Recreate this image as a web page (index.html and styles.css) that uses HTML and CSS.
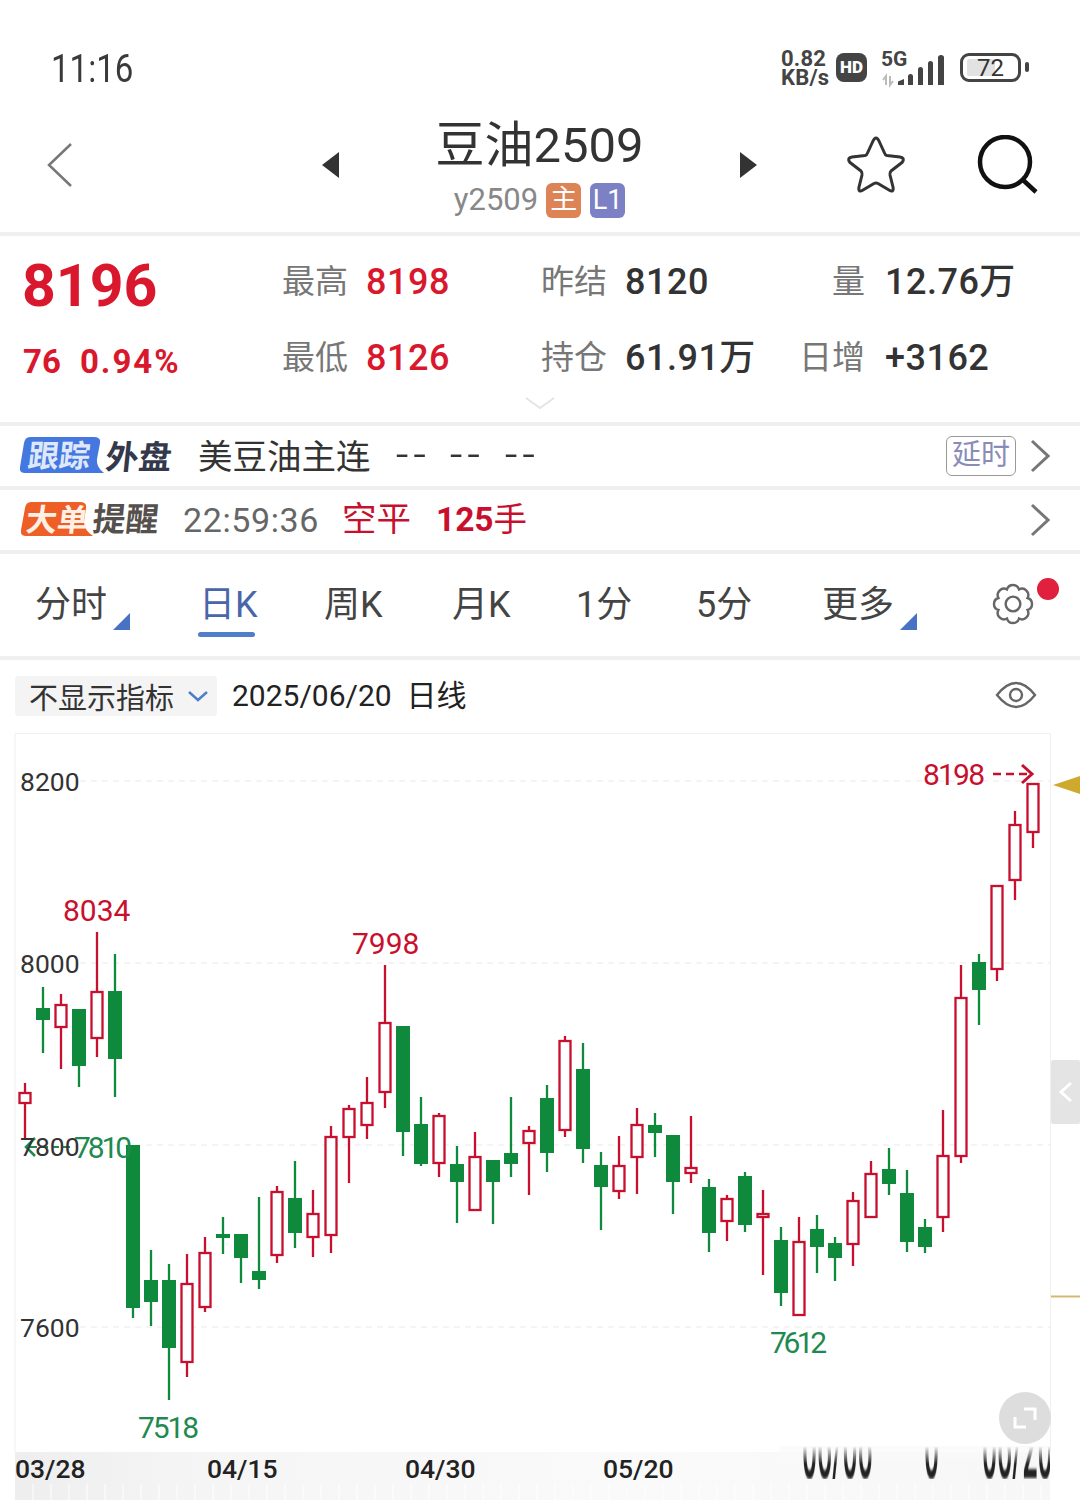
FILE: index.html
```html
<!DOCTYPE html>
<html lang="zh">
<head>
<meta charset="utf-8">
<title>豆油2509</title>
<link rel="stylesheet" href="styles.css">
</head>
<body>
<div class="page">
  <div class="status">
    <span class="clock">11:16</span>
    <div class="status-right">
      <span class="speed">0.82<br>KB/s</span>
      <span class="hd">HD</span>
      <svg class="signal" width="68" height="36" viewBox="0 0 68 36">
        <text class="five-g" x="0" y="17">5G</text>
        <path class="arrows" d="M5 36V27L2 31M9 27V36L12 32"/>
        <path class="bars" d="M17 36V32.5L23 30V36ZM27 36V27.5Q27 25 29.5 25T32 27.5V36ZM37 36V20.5Q37 18 39.5 18T42 20.5V36ZM47 36V14.5Q47 12 49.5 12T52 14.5V36ZM57 36V8.5Q57 6 60 6T63 8.5V36Z"/>
      </svg>
      <div class="battery"><span class="battery-fill"></span><span class="battery-num">72</span></div>
      <span class="nub"></span>
    </div>
  </div>

  <header class="head sep">
    <div class="back-cell">
      <svg width="28" height="46" viewBox="0 0 28 46"><path class="back" d="M25 2L3 23L25 44"/></svg>
    </div>
    <div class="title-cell">
      <span class="tri-l"></span>
      <div class="title-block">
        <div class="title">豆油2509</div>
        <div class="sub">y2509<span class="tag tag-main">主</span><span class="tag tag-l1">L1</span></div>
      </div>
      <span class="tri-r"></span>
    </div>
    <div class="head-icons">
      <svg width="62" height="60" viewBox="0 0 62 60"><path class="star" d="M28 6Q31 0 34 6L39.5 18Q40 20 42 20.5L55 22Q60.5 23 57 27.5L46 36Q44.5 37.5 45 40L48 52Q49 58 44 55L33 48.5Q31 47.5 29 48.5L18 55Q13 58 14 52L17 40Q17.5 37.5 16 36L5 27.5Q1.5 23 7 22L20 20.5Q22 20 22.5 18Z"/></svg>
      <svg width="62" height="60" viewBox="0 0 62 60"><circle class="lens" cx="29" cy="27" r="25"/><path class="lens" d="M47 45L60 57"/></svg>
    </div>
  </header>

  <section class="quote sep">
    <div class="last">8196</div>
    <div class="stat"><span class="lab">最高</span><span class="val up">8198</span></div>
    <div class="stat"><span class="lab">昨结</span><span class="val">8120</span></div>
    <div class="stat stat-r"><span class="lab">量</span><span class="val">12.76万</span></div>
    <div class="change"><span>76</span><span class="pct">0.94%</span></div>
    <div class="stat"><span class="lab">最低</span><span class="val up">8126</span></div>
    <div class="stat"><span class="lab">持仓</span><span class="val">61.91万</span></div>
    <div class="stat stat-r"><span class="lab">日增</span><span class="val">+3162</span></div>
    <div class="more"><svg width="30" height="14" viewBox="0 0 30 14"><path class="more-ic" d="M1 2L15 12L29 2"/></svg></div>
  </section>

  <div class="row row-a sep">
    <div class="logo">
      <span class="pill pill-w83">
        <svg class="pill-bg" width="84" height="36" viewBox="0 0 84 36"><path class="pill-blue" d="M10 0H74Q81 0 80 6L77 22Q76 30 84 36H5Q-1 36 0 30L4 6Q5 0 10 0Z"/></svg>
        <span class="pill-text pill-text-b">跟踪</span>
      </span>
      <span class="logo-txt logo-b">外盘</span>
    </div>
    <span class="name">美豆油主连</span>
    <span class="dash"><span>--</span><span>--</span><span>--</span></span>
    <span class="delay">延时</span>
    <svg class="chev" width="20" height="34" viewBox="0 0 20 34"><path d="M2 2L18 17L2 32"/></svg>
  </div>

  <div class="row row-b sep">
    <div class="logo">
      <span class="pill pill-w72">
        <svg class="pill-bg" width="72" height="34" viewBox="0 0 72 34"><path class="pill-orange" d="M10 0H59Q66 0 65 6L63 20Q63 28 72 34H5Q-1 34 0 28L4 6Q5 0 10 0Z"/></svg>
        <span class="pill-text pill-text-o">大单</span>
      </span>
      <span class="logo-txt logo-g">提醒</span>
    </div>
    <span class="time">22:59:36</span>
    <span class="kp">空平</span>
    <span class="hands"><b>125</b>手</span>
    <svg class="chev" width="20" height="34" viewBox="0 0 20 34"><path d="M2 2L18 17L2 32"/></svg>
  </div>

  <nav class="tabs sep">
    <span class="tab">分时<i class="corner"></i></span>
    <span class="tab tab-on">日K</span>
    <span class="tab">周K</span>
    <span class="tab">月K</span>
    <span class="tab">1分</span>
    <span class="tab">5分</span>
    <span class="tab">更多<i class="corner"></i></span>
    <span class="gear-wrap">
      <svg width="42" height="42" viewBox="0 0 40 40"><path class="gear" d="M33.86 14.26A6 6 0 0 1 33.86 25.74A6 6 0 0 1 25.74 33.86A6 6 0 0 1 14.26 33.86A6 6 0 0 1 6.14 25.74A6 6 0 0 1 6.14 14.26A6 6 0 0 1 14.26 6.14A6 6 0 0 1 25.74 6.14A6 6 0 0 1 33.86 14.26Z"/><circle class="gear" cx="20" cy="20" r="7"/></svg>
      <i class="dot"></i>
    </span>
  </nav>

  <div class="tools">
    <span class="picker">不显示指标<svg width="22" height="12" viewBox="0 0 22 12"><path class="picker-ic" d="M2 2L11 10L20 2"/></svg></span>
    <span class="date">2025/06/20&nbsp; 日线</span>
    <svg class="eye" width="42" height="30" viewBox="0 0 42 30"><path class="eye-ic" d="M2 15Q21 -9 40 15Q21 39 2 15Z"/><circle class="eye-ic" cx="21" cy="15" r="6"/></svg>
  </div>

  <svg class="chart" width="1080" height="767" viewBox="0 733 1080 767">
    <defs>
      <linearGradient id="band" x1="0" x2="1" y1="0" y2="0"><stop offset="0" stop-color="#eeeeee"/><stop offset=".18" stop-color="#f5f5f5"/><stop offset=".6" stop-color="#fafafa"/><stop offset="1" stop-color="#f7f7f7"/></linearGradient>
      <linearGradient id="fade" x1="0" x2="0" y1="0" y2="1"><stop offset="0" stop-color="#fafafa"/><stop offset="1" stop-color="#fafafa" stop-opacity="0"/></linearGradient>
      <clipPath id="smear"><rect x="780" y="1447" width="270" height="32"/></clipPath>
      <filter id="soft" x="-5%" y="-50%" width="110%" height="200%"><feGaussianBlur stdDeviation="0.6 1.6"/></filter>
    </defs>
    <path class="frame" d="M15 1452V733.5H1050.5V1452"/>
    <path class="grid" d="M80 781H1050M80 963H1050M80 1145H1050M80 1327H1050"/>
    <rect x="15" y="1452" width="1035" height="48" fill="url(#band)"/>
    <path class="ticks" d="M33 1484V1500M51 1484V1500M69 1484V1500M87 1484V1500M105 1484V1500M123 1484V1500M141 1484V1500M159 1484V1500M177 1484V1500M195 1484V1500M213 1484V1500M231 1484V1500M249 1484V1500M267 1484V1500M285 1484V1500M303 1484V1500M321 1484V1500M339 1484V1500M357 1484V1500M375 1484V1500M393 1484V1500M411 1484V1500M429 1484V1500M447 1484V1500M465 1484V1500M483 1484V1500M501 1484V1500M519 1484V1500M537 1484V1500M555 1484V1500M573 1484V1500M591 1484V1500M609 1484V1500M627 1484V1500M645 1484V1500M663 1484V1500M681 1484V1500M699 1484V1500M717 1484V1500M735 1484V1500M753 1484V1500M771 1484V1500M789 1484V1500M807 1484V1500M825 1484V1500M843 1484V1500M861 1484V1500M879 1484V1500M897 1484V1500M915 1484V1500M933 1484V1500M951 1484V1500M969 1484V1500M987 1484V1500M1005 1484V1500M1023 1484V1500M1041 1484V1500"/>

    <path class="wick-r" d="M25 1083V1140M61 994V1069M97 932V1057M187 1254V1377M205 1237V1312M277 1186V1263M313 1190V1257M331 1126V1253M349 1105V1183M367 1077V1139M385 965V1108M439 1113V1177M475 1132V1210M529 1126V1195M565 1036V1137M619 1136V1199M637 1108V1194M691 1116V1183M727 1195V1241M763 1190V1275M799 1217V1315M853 1192V1266M871 1161V1217M943 1110V1232M961 965V1163M997 885V981M1015 811V900M1033 784V848"/>
    <path class="wick-g" d="M43 987V1053M79 1009V1087M115 954V1097M133 1145V1318M151 1250V1326M169 1264V1400M223 1217V1254M241 1234V1283M259 1197V1289M295 1161V1248M403 1026V1156M421 1097V1166M457 1146V1223M493 1160V1224M511 1097V1177M547 1085V1172M583 1043V1163M601 1152V1230M655 1113V1157M673 1135V1214M709 1179V1252M745 1172V1232M781 1227V1306M817 1215V1273M835 1237V1281M889 1148V1195M907 1170V1252M925 1219V1253M979 954V1025"/>
    <g class="body-r">
      <rect x="19.5" y="1093" width="11" height="10"/><rect x="55.5" y="1005" width="11" height="22"/><rect x="91.5" y="992" width="11" height="46"/><rect x="181.5" y="1284" width="11" height="78"/><rect x="199.5" y="1253" width="11" height="54"/><rect x="271.5" y="1192" width="11" height="63"/><rect x="307.5" y="1214" width="11" height="23"/><rect x="325.5" y="1137" width="11" height="98"/><rect x="343.5" y="1109" width="11" height="28"/><rect x="361.5" y="1103" width="11" height="22"/><rect x="379.5" y="1023" width="11" height="69"/><rect x="433.5" y="1116" width="11" height="47"/><rect x="469.5" y="1157" width="11" height="53"/><rect x="523.5" y="1131" width="11" height="12"/><rect x="559.5" y="1041" width="11" height="89"/><rect x="613.5" y="1166" width="11" height="25"/><rect x="631.5" y="1125" width="11" height="32"/><rect x="685.5" y="1168" width="11" height="5"/><rect x="721.5" y="1199" width="11" height="22"/><rect x="757.5" y="1214" width="11" height="3"/><rect x="793.5" y="1242" width="11" height="73"/><rect x="847.5" y="1201" width="11" height="43"/><rect x="865.5" y="1174" width="11" height="43"/><rect x="937.5" y="1156" width="11" height="61"/><rect x="955.5" y="998" width="11" height="158"/><rect x="991.5" y="886" width="11" height="83"/><rect x="1009.5" y="825" width="11" height="55"/><rect x="1027.5" y="784" width="11" height="48"/>
    </g>
    <g class="body-g">
      <rect x="36" y="1008" width="14" height="12"/><rect x="72" y="1009" width="14" height="57"/><rect x="108" y="991" width="14" height="68"/><rect x="126" y="1145" width="14" height="163"/><rect x="144" y="1280" width="14" height="22"/><rect x="162" y="1280" width="14" height="68"/><rect x="216" y="1234" width="14" height="4"/><rect x="234" y="1234" width="14" height="24"/><rect x="252" y="1271" width="14" height="9"/><rect x="288" y="1198" width="14" height="35"/><rect x="396" y="1026" width="14" height="106"/><rect x="414" y="1124" width="14" height="40"/><rect x="450" y="1164" width="14" height="18"/><rect x="486" y="1160" width="14" height="22"/><rect x="504" y="1153" width="14" height="11"/><rect x="540" y="1098" width="14" height="55"/><rect x="576" y="1069" width="14" height="80"/><rect x="594" y="1165" width="14" height="22"/><rect x="648" y="1125" width="14" height="8"/><rect x="666" y="1135" width="14" height="47"/><rect x="702" y="1187" width="14" height="46"/><rect x="738" y="1176" width="14" height="49"/><rect x="774" y="1240" width="14" height="53"/><rect x="810" y="1229" width="14" height="18"/><rect x="828" y="1243" width="14" height="15"/><rect x="882" y="1169" width="14" height="15"/><rect x="900" y="1193" width="14" height="49"/><rect x="918" y="1227" width="14" height="20"/><rect x="972" y="962" width="14" height="28"/>
    </g>

    <path class="low-dash" d="M30 1147H74"/>
    <path class="low-head" d="M35 1138L26 1147L35 1156"/>
    <text class="low" x="74" y="1158" textLength="58">7810</text>
    <text class="axis" x="20" y="791">8200</text>
    <text class="axis" x="20" y="973">8000</text>
    <text class="axis" x="20" y="1156">7800</text>
    <text class="axis" x="20" y="1337">7600</text>
    <text class="peak" x="63" y="921">8034</text>
    <text class="peak" x="352" y="954">7998</text>
    <text class="peak" x="923" y="785" textLength="62">8198</text>
    <path class="peak-dash" d="M993 774H1031"/>
    <path class="peak-head" d="M1022 765L1032 774L1022 783"/>
    <text class="low" x="138" y="1438" textLength="61">7518</text>
    <text class="low" x="770" y="1353" textLength="57">7612</text>

    <text class="xdate" x="15" y="1478">03/28</text>
    <text class="xdate" x="207" y="1478">04/15</text>
    <text class="xdate" x="405" y="1478">04/30</text>
    <text class="xdate" x="603" y="1478">05/20</text>
    <g clip-path="url(#smear)"><g filter="url(#soft)">
      <text class="xdate" transform="translate(802 1478) scale(1 3.6)">06/06</text>
      <text class="xdate" transform="translate(924 1478) scale(1 3.6)">0</text>
      <text class="xdate" transform="translate(982 1478) scale(1 3.6)">06/20</text>
    </g></g>
    <rect x="780" y="1446" width="270" height="18" fill="url(#fade)"/>

    <path class="gold-tri" d="M1053 785L1080 776V794Z"/>
    <path class="gold-line" d="M1051 1296.5H1080"/>
    <rect class="side" x="1051" y="1060" width="29" height="64" rx="2"/>
    <path class="side-ic" d="M1071 1083L1061 1092L1071 1101"/>
    <circle class="expand" cx="1025" cy="1418" r="26"/>
    <path class="expand-ic" d="M1015 1417V1427H1026M1024 1409H1035V1420"/>
  </svg>
</div>
</body>
</html>
```

FILE: styles.css
```css
* { box-sizing: border-box; }
html, body { margin: 0; padding: 0; background: #fff; }
body { font-family: Roboto, "Noto Sans CJK SC", sans-serif; color: #333; }
i { font-style: normal; }

.page { width: 1080px; height: 1500px; overflow: hidden; display: flex; flex-direction: column; background: #fff; }
.sep { border-bottom: 4px solid #f0f0f0; }

/* status bar */
.status { height: 112px; flex: none; display: flex; justify-content: space-between; padding: 45px 51px 0; }
.clock { display: inline-block; height: 48px; font-size: 38px; line-height: 48px; color: #3a3a3a; transform: scaleX(.87); transform-origin: left center; }
.status-right { position: relative; display: flex; align-items: flex-start; height: 40px; padding-top: 7px; }
.speed { width: 55px; font-size: 22px; line-height: 19px; font-weight: 700; color: #444; margin-top: -3px; letter-spacing: .2px; }
.hd { width: 31px; height: 29px; background: #444; color: #fff; border-radius: 8px; font-size: 17px; line-height: 29px; text-align: center; font-weight: 900; margin-top: 1px; }
.signal { margin-left: 14px; margin-top: -3px; overflow: visible; }
.five-g { font-size: 21px; font-weight: 700; fill: #444; }
.arrows { fill: none; stroke: #bbb; stroke-width: 2; }
.bars { fill: #444; }
.battery { position: relative; width: 61px; height: 29px; border: 3px solid #444; border-radius: 9px; margin-left: 11px; margin-top: 1px; overflow: hidden; }
.battery-fill { display: block; width: 28px; height: 17px; margin: 3px 0 0 4px; background: #e2e2e2; border-radius: 2px; }
.battery-num { position: absolute; left: 0; right: 0; top: -2px; text-align: center; font-size: 24px; line-height: 29px; color: #333; }
.nub { width: 4px; height: 10px; background: #444; border-radius: 2px; margin: 10px 0 0 4px; }

/* header */
.head { height: 124px; flex: none; display: grid; grid-template-columns: 322px 435px 1fr; grid-template-rows: 102px; align-items: center; padding-bottom: 18px; }
.back-cell { padding-left: 46px; display: flex; margin-top: 4px; }
.back { fill: none; stroke: #777; stroke-width: 2.5; }
.title-cell { display: flex; align-items: center; justify-content: space-between; margin-top: 4px; }
.tri-l, .tri-r { width: 0; height: 0; border-top: 13px solid transparent; border-bottom: 13px solid transparent; }
.tri-l { border-right: 17px solid #333; }
.tri-r { border-left: 17px solid #333; }
.title-block { display: flex; flex-direction: column; align-items: center; margin-top: 4px; }
.title { font-size: 49px; line-height: 60px; color: #333; white-space: nowrap; margin-top: 1px; }
.sub { display: flex; align-items: center; font-size: 31px; line-height: 38px; color: #888; margin-top: 5px; }
.tag { width: 35px; height: 35px; border-radius: 6px; color: #fff; font-size: 27px; line-height: 34px; text-align: center; margin-left: 8px; }
.tag-main { background: #dd8355; }
.tag-l1 { background: #7c80c4; margin-left: 9px; }
.head-icons { display: flex; gap: 69px; padding-left: 88px; margin-top: 4px; }
.star { fill: none; stroke: #333; stroke-width: 3; stroke-linejoin: round; }
.lens { fill: none; stroke: #111; stroke-width: 4.5; }

/* quote */
.quote { height: 190px; flex: none; display: grid; grid-template-columns: 282px 259px 258px 1fr; grid-template-rows: 76px 76px 1fr; padding-top: 8px; }
.last { font-size: 59px; line-height: 76px; font-weight: 700; color: #d9182d; padding-left: 22px; margin-top: 4px; }
.change { display: flex; gap: 19px; font-size: 33px; line-height: 76px; font-weight: 700; color: #d9182d; padding-left: 23px; padding-top: 4px; height: 76px; }
.pct { letter-spacing: 2px; }
.stat { display: flex; align-items: center; }
.lab { width: 84px; flex: none; font-size: 33px; line-height: 44px; color: #777; white-space: nowrap; margin-top: 0; }
.stat-r .lab { text-align: right; padding-right: 20px; width: 86px; }
.val { font-size: 36px; line-height: 44px; font-weight: 500; color: #333; letter-spacing: .5px; white-space: nowrap; }
.up { color: #d9182d; }
.more { grid-column: 1 / -1; display: flex; justify-content: center; }
.more-ic { fill: none; stroke: #e4e4e4; stroke-width: 2; }

/* info rows */
.row { height: 64px; flex: none; display: flex; align-items: center; padding-left: 20px; position: relative; }
.logo { display: flex; align-items: center; font-weight: 700; }
.pill { position: relative; display: block; }
.pill-w83 { width: 84px; height: 36px; margin-top: -2px; }
.pill-w72 { width: 72px; height: 34px; margin-top: -2px; }
.pill-bg { position: absolute; left: 0; top: 0; }
.pill-blue { fill: #4477e0; }
.pill-orange { fill: #ee5f27; }
.pill-text { position: relative; display: inline-block; transform: skewX(-6deg); white-space: nowrap; margin-top: 3px; }
.pill-text-b { font-size: 31px; line-height: 34px; color: #dfe8fb; padding-left: 8px; }
.pill-text-o { font-size: 31px; line-height: 32px; color: #fff0e6; padding-left: 5px; }
.logo-txt { display: inline-block; font-size: 33px; transform: skewX(-6deg); white-space: nowrap; }
.logo-b { color: #33384a; margin-left: 2px; margin-top: -2px; }
.logo-g { color: #55504c; margin-left: 0; margin-top: -6px; }
.name { font-size: 34.5px; color: #333; margin-left: 26px; white-space: nowrap; margin-top: -4px; }
.dash { display: flex; gap: 28px; margin-left: 25px; font-size: 34px; color: #333; letter-spacing: 4px; margin-top: -4px; }
.dash span { display: inline-block; transform: scaleX(1.3); transform-origin: left center; }
.delay { width: 70px; height: 40px; margin-left: auto; border: 1px solid #999; border-radius: 6px; color: #8a8cb8; font-size: 29px; line-height: 37px; text-align: center; }
.chev { margin-left: 14px; margin-right: 30px; }
.chev path { fill: none; stroke: #777; stroke-width: 3; }
.row-b { padding-left: 21px; }
.row-b .chev { margin-left: auto; }
.time { font-size: 34px; color: #666; margin-left: 24px; letter-spacing: .6px; }
.kp { font-size: 34.5px; color: #c8102e; margin-left: 23px; margin-top: -8px; white-space: nowrap; }
.hands { font-size: 33.5px; color: #c8102e; margin-left: 25px; margin-top: -8px; white-space: nowrap; }
.hands b { font-weight: 700; }

/* tabs */
.tabs { height: 106px; flex: none; display: grid; grid-template-columns: 164px 125px 128px 124px 120px 126px 170px 1fr; padding-left: 35px; align-items: start; }
.tab { position: relative; font-size: 36px; line-height: 102px; color: #444; white-space: nowrap; }
.corner { position: absolute; left: 78px; top: 59px; width: 0; height: 0; border-left: 17px solid transparent; border-bottom: 17px solid #4a72c4; }
.tab-on { color: #4a66a8; }
.tab-on::after { content: ""; position: absolute; left: -1px; top: 78px; width: 57px; height: 5px; border-radius: 3px; background: #4f7fc8; }
.gear-wrap { position: relative; display: block; padding-top: 29px; }
.gear { fill: none; stroke: #666; stroke-width: 2.3; }
.dot { position: absolute; left: 45px; top: 24px; width: 22px; height: 22px; border-radius: 50%; background: #e0203c; }

/* toolbar */
.tools { height: 73px; flex: none; display: flex; align-items: flex-start; padding: 16px 0 0 15px; position: relative; }
.picker { display: flex; align-items: center; width: 202px; height: 40px; background: #f4f4f4; border-radius: 4px; padding-left: 14px; font-size: 29px; color: #333; white-space: nowrap; gap: 13px; }
.picker-ic { fill: none; stroke: #4f7fc8; stroke-width: 2.5; }
.date { font-size: 30px; line-height: 40px; color: #222; margin-left: 15px; white-space: nowrap; }
.eye { margin-left: auto; margin-right: 43px; margin-top: 4px; }
.eye-ic { fill: none; stroke: #666; stroke-width: 2.4; }

/* chart */
.chart { display: block; flex: none; font-family: Roboto, sans-serif; }
.frame { fill: none; stroke: #f0f0f0; stroke-width: 1; }
.grid { fill: none; stroke: #e9e9e9; stroke-width: 1; stroke-dasharray: 6 5; }
.ticks { fill: none; stroke: #fff; stroke-width: 1.2; opacity: .8; }
.wick-r { fill: none; stroke: #c8102e; stroke-width: 2.3; }
.wick-g { fill: none; stroke: #0f8a3c; stroke-width: 2.3; }
.body-r rect { fill: #fff; stroke: #c8102e; stroke-width: 2.3; }
.body-g rect { fill: #0f8a3c; }
.axis { font-size: 26.5px; fill: #333; }
.peak { font-size: 30px; fill: #c8102e; }
.low { font-size: 30px; fill: #1f8a50; }
.low-dash { fill: none; stroke: #1f8a50; stroke-width: 2; stroke-dasharray: 7 4; }
.low-head { fill: none; stroke: #1f8a50; stroke-width: 2.5; }
.peak-dash { fill: none; stroke: #c8102e; stroke-width: 2.5; stroke-dasharray: 8 5; }
.peak-head { fill: none; stroke: #c8102e; stroke-width: 3; }
.xdate { font-size: 26.5px; font-weight: 500; fill: #222; }
.gold-tri { fill: #cfa92e; }
.gold-line { fill: none; stroke: #d4b870; stroke-width: 2; }
.side { fill: #e4e4e4; }
.side-ic { fill: none; stroke: #fff; stroke-width: 3; }
.expand { fill: #ddd; }
.expand-ic { fill: none; stroke: #fff; stroke-width: 3; }
```
